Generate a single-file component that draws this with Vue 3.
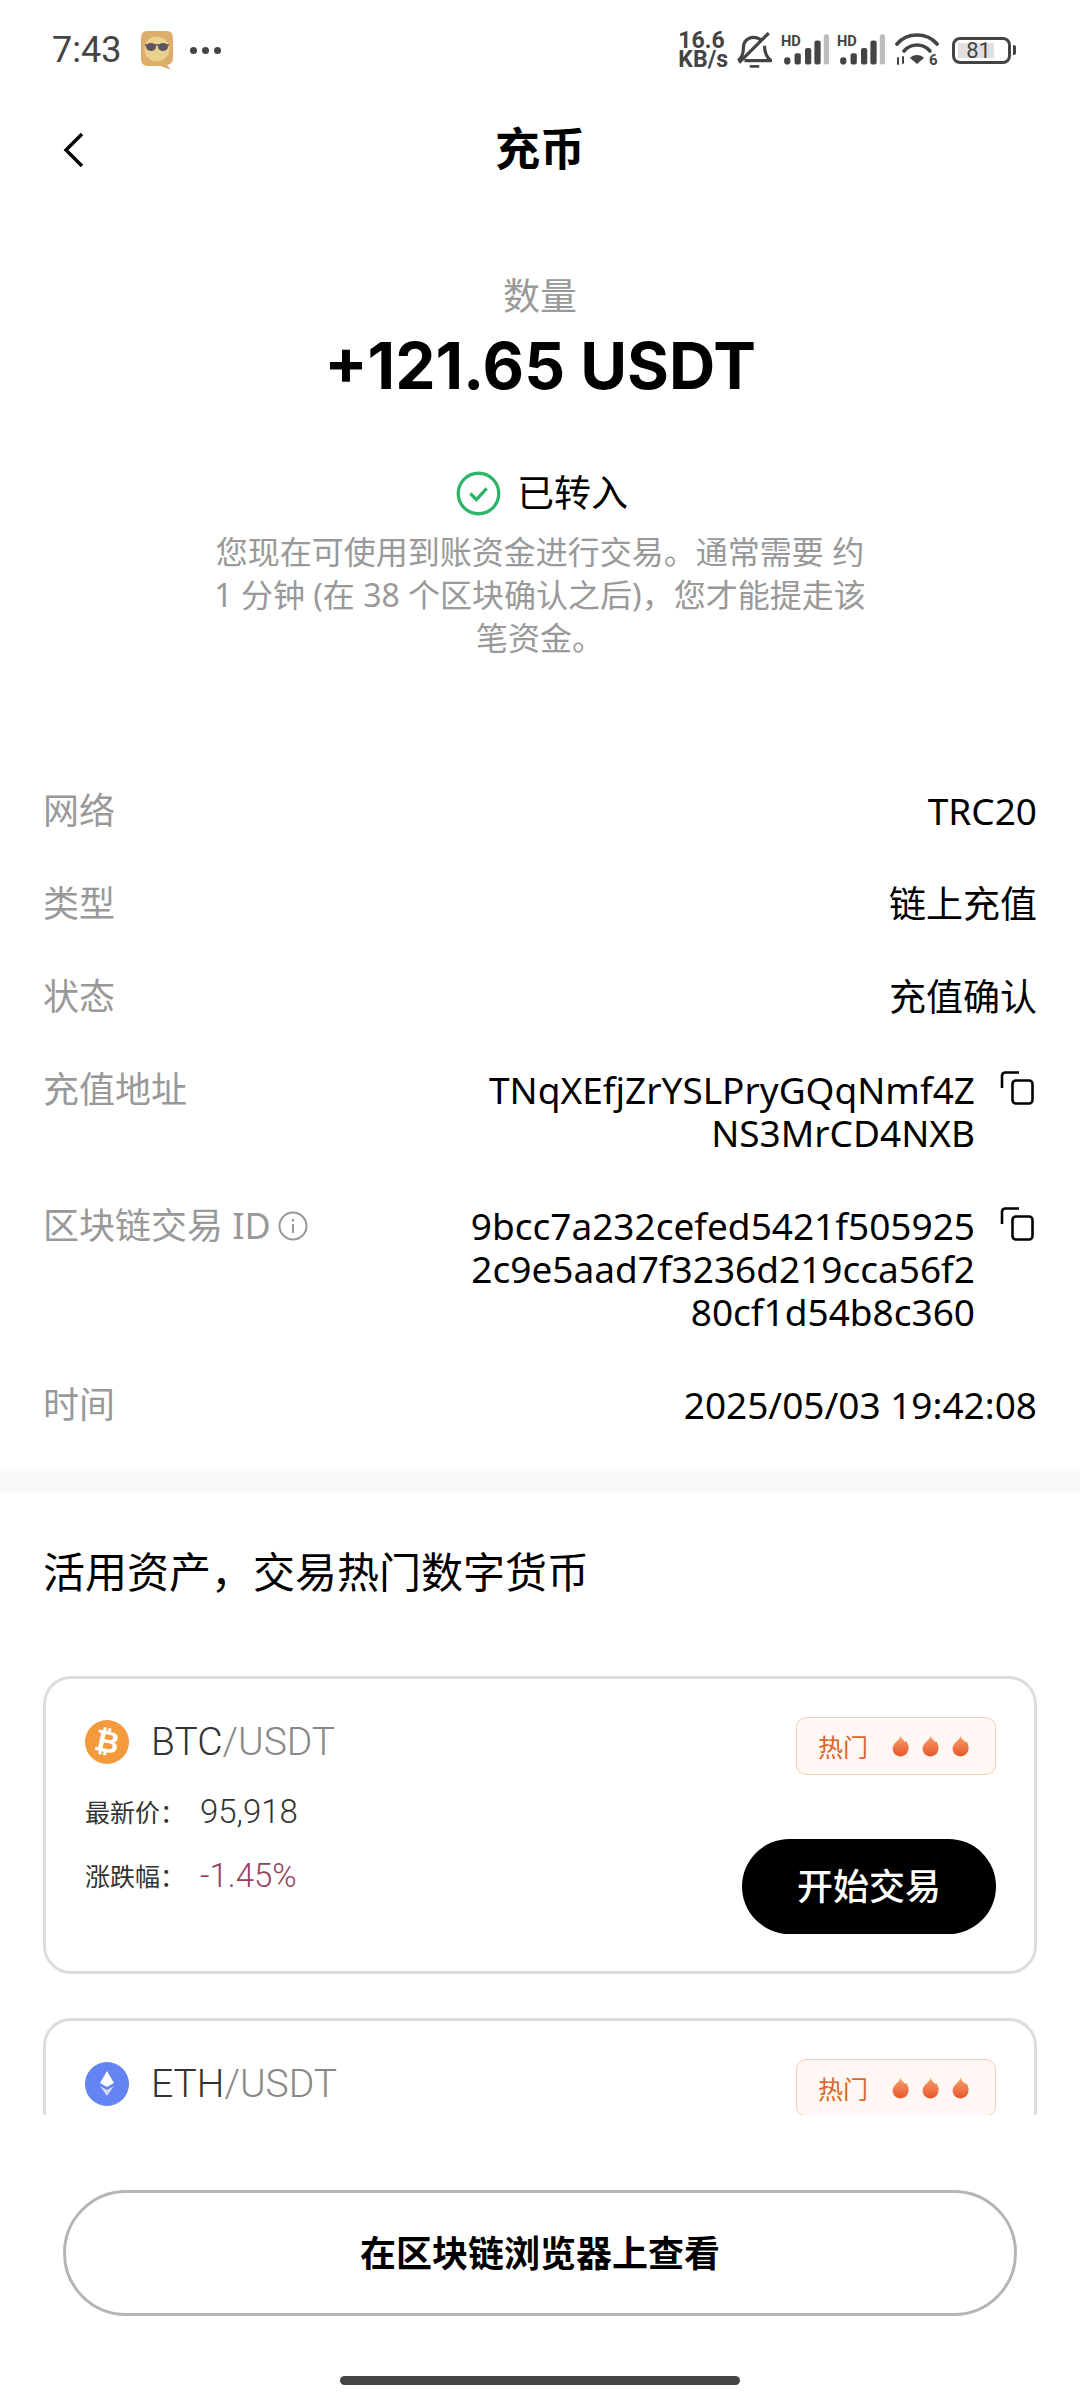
<script setup>
const rows = [
  { label: '网络', value: ['TRC20'] },
  { label: '类型', value: ['链上充值'] },
  { label: '状态', value: ['充值确认'] },
  { label: '充值地址', value: ['TNqXEfjZrYSLPryGQqNmf4Z', 'NS3MrCD4NXB'], copy: true },
  { label: '区块链交易 ID', value: ['9bcc7a232cefed5421f505925', '2c9e5aad7f3236d219cca56f2', '80cf1d54b8c360'], copy: true, info: true },
  { label: '时间', value: ['2025/05/03 19:42:08'] }
]

// the second card runs under the footer, its figures are not on screen
const coins = [
  { base: 'BTC', price: '95,918', change: '-1.45%' },
  { base: 'ETH' }
]
</script>

<template>
  <div class="page">
    <div class="status-bar">
      <div class="status-left">
        <span class="time">7:43</span>
        <svg class="avatar" width="36" height="40" viewBox="0 0 36 40">
          <path d="M8 1h20q6 0 6 7v20q0 6-6 7l4 5-10-4H9q-7 0-7-7V8q0-7 6-7z" fill="#dcae6a" />
          <circle cx="18" cy="19" r="12.500" fill="#ead28e" />
          <ellipse cx="12" cy="17" rx="5" ry="4" fill="#5d5560" />
          <ellipse cx="24" cy="17" rx="5" ry="4" fill="#5d5560" />
          <path d="M6 15h24" stroke="#5d5560" stroke-width="1.500" />
        </svg>
        <span class="dots"><i></i><i></i><i></i></span>
      </div>
      <div class="status-right">
        <div class="speed"><span>16.6</span><span>KB/s</span></div>
        <svg class="bell" width="35" height="36" viewBox="0 0 33 34" fill="none" stroke="#444" stroke-width="3">
          <path d="M1 27c4-3 5-7 5-12 0-6 4-10 10-10 3 0 5 1 7 3M26 13c0 7 2 11 6 14H7" stroke-linejoin="round" />
          <path d="M2 29 30 1" />
          <path d="M12 32.500h9" stroke-width="2.500" />
        </svg>
        <svg v-for="n in 2" :key="n" class="signal" width="48" height="32" viewBox="0 0 46 30">
          <text x="0" y="11" class="hd">HD</text>
          <rect x="3" y="22" width="6" height="7" rx="3" fill="#444" />
          <rect x="13" y="18" width="6" height="11" rx="2" fill="#444" />
          <rect x="23" y="13" width="6" height="16" rx="2" fill="#444" />
          <rect x="32" y="6" width="6" height="23" rx="2" fill="#444" />
          <rect x="41" y="0" width="5" height="29" rx="2" fill="#bdbdbd" />
        </svg>
        <svg class="wifi" width="44" height="36" viewBox="0 0 44 36" fill="none" stroke="#444" stroke-width="3.600" stroke-linecap="round">
          <path d="M2 12C12 0 32 0 42 12" />
          <path d="M9 19C16 11 28 11 35 19" />
          <path d="M22 32l-7-6c3-4 11-4 14 0z" fill="#444" stroke="none" />
          <path d="M3 26v6M8 25v6" stroke-width="2" />
          <text x="34" y="33" class="six">6</text>
        </svg>
        <div class="battery">
          <div class="battery-body"><div class="battery-fill"></div><span>81</span></div>
          <div class="battery-tip"></div>
        </div>
      </div>
    </div>

    <div class="header">
      <svg class="back" width="22" height="36" viewBox="0 0 22 36" fill="none" stroke="#000" stroke-width="3.400">
        <path d="M19 2 3 18l16 16" />
      </svg>
      <h1>充币</h1>
    </div>

    <div class="scroll">
      <div class="summary">
        <div class="amount-label">数量</div>
        <div class="amount">+121.65 USDT</div>
        <div class="state">
          <svg width="45" height="45" viewBox="0 0 44 44" fill="none" stroke="#2fb56a">
            <circle cx="22" cy="22" r="19.800" stroke-width="3.200" />
            <path d="m14 22 6 6 10-11" stroke-width="3.200" />
          </svg>
          <span>已转入</span>
        </div>
        <p class="note">您现在可使用到账资金进行交易。通常需要 约<br />1 分钟 (在 38 个区块确认之后)，您才能提走该<br />笔资金。</p>
      </div>

      <div class="details">
        <div v-for="row in rows" :key="row.label" class="row">
          <div class="row-label">
            {{ row.label }}
            <svg v-if="row.info" class="info" width="32" height="32" viewBox="0 0 32 32" fill="none" stroke="#999" stroke-width="2">
              <circle cx="16" cy="16" r="13.500" />
              <path d="M16 14v9" />
              <path d="M16 9v2.600" />
            </svg>
          </div>
          <div class="row-value">
            <div class="lines">
              <div v-for="line in row.value" :key="line">{{ line }}</div>
            </div>
            <svg v-if="row.copy" class="copy" width="34" height="34" viewBox="0 0 34 34" fill="none" stroke="#000" stroke-width="2.600">
              <path d="M2 17V5q0-3.500 3.500-3.500H19" />
              <rect x="12.500" y="9.500" width="20" height="23" rx="3.500" />
            </svg>
          </div>
        </div>
      </div>

      <div class="divider"></div>

      <div class="market">
        <h2>活用资产，交易热门数字货币</h2>
        <div v-for="coin in coins" :key="coin.base" class="card">
          <div class="card-main">
            <div class="pair">
              <svg v-if="coin.base === 'BTC'" width="44" height="44" viewBox="0 0 44 44">
                <circle cx="22" cy="22" r="22" fill="#f39a3c" />
                <text x="22" y="32" text-anchor="middle" class="btc" transform="rotate(12 22 22)">₿</text>
              </svg>
              <svg v-else width="44" height="44" viewBox="0 0 44 44">
                <circle cx="22" cy="22" r="22" fill="#6484f3" />
                <path d="m22 9 7 12-7 4-7-4z" fill="#fff" />
                <path d="m15 24 7 4 7-4-7 10z" fill="#fff" opacity=".7" />
              </svg>
              <span class="pair-name">{{ coin.base }}<em>/USDT</em></span>
            </div>
            <template v-if="coin.price">
              <div class="stat"><span class="stat-label">最新价：</span><span class="stat-value">{{ coin.price }}</span></div>
              <div class="stat"><span class="stat-label">涨跌幅：</span><span class="stat-value down">{{ coin.change }}</span></div>
            </template>
          </div>
          <div class="card-side">
            <div class="hot">
              <span>热门</span>
              <svg v-for="n in 3" :key="n" width="17" height="22" viewBox="0 0 18 22">
                <defs>
                  <linearGradient :id="`flame-${coin.base}-${n}`" x1="0" y1="0" x2="0" y2="1">
                    <stop offset="0" stop-color="#f8a06c" />
                    <stop offset="1" stop-color="#e8562a" />
                  </linearGradient>
                </defs>
                <path d="M9 0c1 4 3 4 5 7 0-1 1-1 1-1 3 4 3 7 2 10-1 4-5 6-8 6s-7-2-8-6c-1-4 1-7 3-9 2-2 5-4 5-7z" :fill="`url(#flame-${coin.base}-${n})`" />
              </svg>
            </div>
            <button class="trade">开始交易</button>
          </div>
        </div>
      </div>
    </div>

    <div class="footer">
      <button class="explorer">在区块链浏览器上查看</button>
      <div class="home-bar"></div>
    </div>
  </div>
</template>

<style>
html, body {
  margin: 0;
  background: #fff;
}
</style>

<style scoped>
.page {
  width: 1080px;
  height: 2400px;
  display: flex;
  flex-direction: column;
  overflow: hidden;
  background: #fff;
  font-family: "Noto Sans", "Noto Sans CJK SC", sans-serif;
  color: #000;
}

.status-bar {
  height: 100px;
  box-sizing: border-box;
  padding: 0 64px 0 52px;
  display: flex;
  align-items: center;
  justify-content: space-between;
  color: #444;
}
.status-left,
.status-right {
  display: flex;
  align-items: center;
}
.time {
  font-size: 36px;
  font-family: Roboto, sans-serif;
}
.avatar {
  margin-left: 18px;
}
.dots {
  display: flex;
  gap: 5px;
  margin-left: 15px;
}
.dots i {
  width: 7px;
  height: 7px;
  border-radius: 50%;
  background: #444;
}
.speed {
  display: flex;
  flex-direction: column;
  align-items: flex-start;
  font: 700 23px/19px Roboto, sans-serif;
}
.bell {
  margin-left: 9px;
}
.signal {
  margin-left: 9px;
  overflow: visible;
}
.signal + .signal {
  margin-left: 8px;
}
.wifi {
  margin-left: 10px;
}
.hd {
  font: 700 14px Roboto, sans-serif;
  fill: #444;
}
.six {
  font: 700 15px Roboto, sans-serif;
  fill: #444;
  stroke: none;
}
.battery {
  display: flex;
  align-items: center;
  gap: 2px;
  margin-left: 13px;
}
.battery-body {
  width: 59px;
  height: 27px;
  box-sizing: border-box;
  border: 3px solid #444;
  border-radius: 8px;
  position: relative;
  display: flex;
  align-items: center;
  justify-content: center;
  font: 400 22px Roboto, sans-serif;
}
.battery-fill {
  position: absolute;
  left: 3px;
  top: 3px;
  bottom: 3px;
  width: 36px;
  background: #e0e0e0;
}
.battery-body span {
  position: relative;
  margin-right: 6px;
}
.battery-tip {
  width: 3px;
  height: 10px;
  background: #444;
  border-radius: 0 2px 2px 0;
}

.header {
  height: 98px;
  box-sizing: border-box;
  padding-bottom: 5px;
  display: flex;
  align-items: center;
  justify-content: center;
  position: relative;
}
.back {
  position: absolute;
  left: 63px;
  top: 32px;
}
h1 {
  margin: 0;
  font-size: 45px;
  font-weight: 700;
}

.scroll {
  height: 1917px;
  overflow: hidden;
}

.summary {
  display: flex;
  flex-direction: column;
  align-items: center;
  text-align: center;
  padding-top: 74px;
}
.amount-label {
  font-size: 37px;
  line-height: 48px;
  color: #999;
}
.amount {
  margin-top: 8px;
  font: 700 64px/76px Inter, sans-serif;
}
.state {
  margin-top: 64px;
  margin-left: 4px;
  display: flex;
  align-items: center;
  gap: 16px;
  font-size: 37px;
  line-height: 50px;
}
.note {
  margin: 12px 0 0;
  font-size: 32px;
  line-height: 43px;
  color: #999;
}

.details {
  padding: 130px 43px 0;
}
.row {
  display: flex;
  justify-content: space-between;
  padding-bottom: 50px;
  font-size: 36px;
  line-height: 43px;
}
.row:last-child {
  padding-bottom: 45px;
}
.row-label {
  display: flex;
  align-items: flex-start;
  color: #999;
  white-space: nowrap;
}
.info {
  margin: 6px 0 0 6px;
}
.row-value {
  display: flex;
  text-align: right;
  font-size: 37px;
}
.copy {
  margin: 3px 3px 0 25px;
}

.divider {
  height: 21px;
  background: #f9f9f9;
}

.market {
  padding: 0 43px;
}
h2 {
  margin: 0;
  padding: 54px 0 78px;
  font-size: 42px;
  line-height: 52px;
  font-weight: 400;
}
.card {
  height: 298px;
  box-sizing: border-box;
  margin-bottom: 44px;
  padding: 38px 38px 37px 39px;
  border: 3px solid #ddd;
  border-radius: 28px;
  display: flex;
  justify-content: space-between;
}
.pair {
  display: flex;
  align-items: center;
  gap: 22px;
  height: 44px;
  margin-top: 3px;
}
.pair-name {
  font: 300 39px Roboto, sans-serif;
  color: #333;
}
.pair-name em {
  font-style: normal;
  color: #888;
}
.btc {
  font: 700 30px Roboto, "DejaVu Sans", sans-serif;
  fill: #fff;
}
.stat {
  display: flex;
  align-items: center;
  height: 64px;
}
.pair + .stat {
  margin-top: 15px;
}
.stat-label {
  width: 115px;
  font-size: 25px;
  color: #333;
}
.stat-value {
  font: 300 33px Roboto, sans-serif;
  color: #333;
}
.down {
  color: #93415f;
}
.card-side {
  display: flex;
  flex-direction: column;
  align-items: flex-end;
  justify-content: space-between;
}
.hot {
  height: 58px;
  width: 200px;
  box-sizing: border-box;
  padding: 0 0 0 21px;
  border: 1px solid #f3cfb9;
  border-radius: 10px;
  background: #fef7f3;
  display: flex;
  align-items: center;
  gap: 13px;
  color: #d9682a;
  font-size: 25px;
}
.hot span {
  margin-right: 11px;
}
.trade {
  width: 254px;
  height: 95px;
  padding-bottom: 5px;
  border: 0;
  border-radius: 48px;
  background: #000;
  color: #fff;
  font-family: inherit;
  font-size: 36px;
  font-weight: 500;
}

.footer {
  flex: 1;
  display: flex;
  flex-direction: column;
  align-items: center;
  padding-top: 75px;
}
.explorer {
  width: 954px;
  height: 126px;
  padding-bottom: 4px;
  border: 3px solid #b5b5b5;
  border-radius: 63px;
  background: #fff;
  color: #000;
  font-family: inherit;
  font-size: 36px;
  font-weight: 700;
}
.home-bar {
  width: 400px;
  height: 9px;
  margin-top: 60px;
  border-radius: 5px;
  background: #444;
}
</style>
